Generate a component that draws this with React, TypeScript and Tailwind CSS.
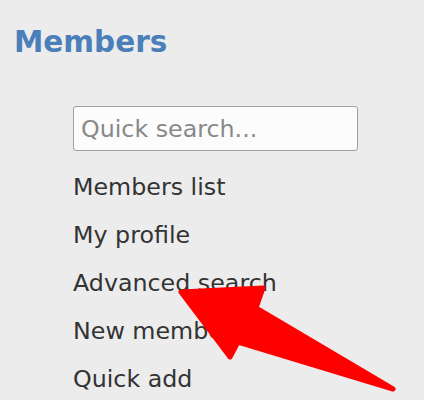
import React from 'react';

const items = ['Members list', 'My profile', 'Advanced search', 'New member', 'Quick add'];

export default function App() {
  return (
    <div className="relative h-[400px] w-[424px] overflow-hidden bg-[#ececec] font-['DejaVu_Sans',sans-serif]">
      <h1 className="pl-[14px] pt-[24px] text-[29.5px] font-bold leading-[36px] text-[#4a7fba]">Members</h1>
      <div className="ml-[73px] mt-[46px] flex flex-col">
        <input
          type="text"
          placeholder="Quick search..."
          className="h-[45px] w-[285px] rounded-[3px] border border-[#a0a0a8] bg-[#fcfcfc] px-[7px] text-[23.75px] text-[#333] placeholder:text-[#888] outline-none"
        />
        <ul className="mt-[12px] flex flex-col">
          {items.map((item) => (
            <li key={item} className="h-[48px] text-[23.75px] leading-[48px] text-[#333]">
              {item}
            </li>
          ))}
        </ul>
      </div>
      <svg className="pointer-events-none absolute left-0 top-0" width="424" height="400" viewBox="0 0 424 400">
        <polygon
          points="181,292 263,288 256,308 393,389 238,342 230,357"
          fill="#ff0000"
          stroke="#ff0000"
          strokeWidth="5"
          strokeLinejoin="round"
        />
      </svg>
    </div>
  );
}
